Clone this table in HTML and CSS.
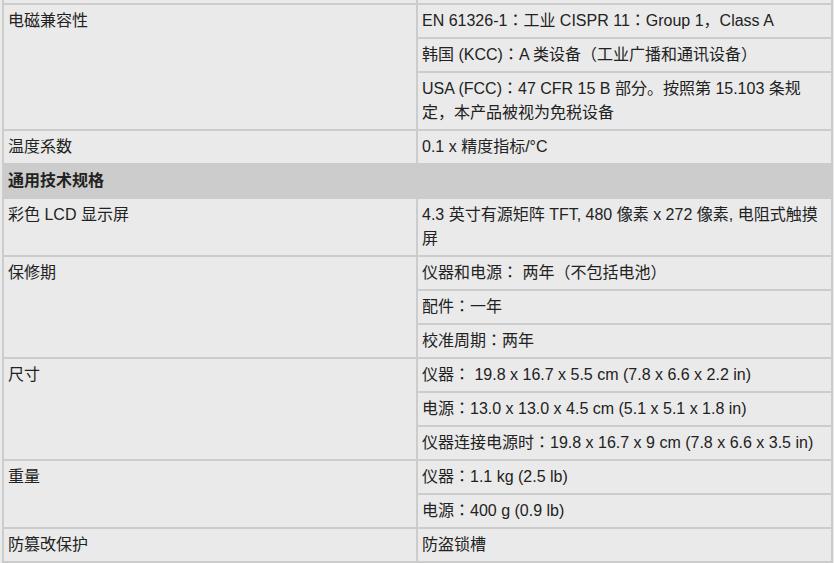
FILE: index.html
```html
<!DOCTYPE html>
<html lang="zh-CN">
<head>
<meta charset="utf-8">
<title>技术规格</title>
<link rel="stylesheet" href="styles.css">
</head>
<body>
<table class="spec">
  <colgroup><col class="c-name"><col class="c-val"></colgroup>
  <tbody>
    <tr class="cut"><td></td><td></td></tr>
    <tr><td rowspan="3">电磁兼容性</td><td>EN 61326-1：工业 CISPR 11：Group 1，Class A</td></tr>
    <tr><td>韩国 (KCC)：A 类设备（工业广播和通讯设备）</td></tr>
    <tr><td>USA (FCC)：47 CFR 15 B 部分。按照第 15.103 条规定，本产品被视为免税设备</td></tr>
    <tr><td>温度系数</td><td>0.1 x 精度指标/°C</td></tr>
    <tr class="section"><th colspan="2">通用技术规格</th></tr>
    <tr><td>彩色 LCD 显示屏</td><td>4.3 英寸有源矩阵 TFT, 480 像素 x 272 像素, 电阻式触摸屏</td></tr>
    <tr><td rowspan="3">保修期</td><td>仪器和电源： 两年（不包括电池）</td></tr>
    <tr><td>配件：一年</td></tr>
    <tr><td>校准周期：两年</td></tr>
    <tr><td rowspan="3">尺寸</td><td>仪器： 19.8 x 16.7 x 5.5 cm (7.8 x 6.6 x 2.2 in)</td></tr>
    <tr><td>电源：13.0 x 13.0 x 4.5 cm (5.1 x 5.1 x 1.8 in)</td></tr>
    <tr><td>仪器连接电源时：19.8 x 16.7 x 9 cm (7.8 x 6.6 x 3.5 in)</td></tr>
    <tr><td rowspan="2">重量</td><td>仪器：1.1 kg (2.5 lb)</td></tr>
    <tr><td>电源：400 g (0.9 lb)</td></tr>
    <tr><td>防篡改保护</td><td>防盗锁槽</td></tr>
  </tbody>
</table>
</body>
</html>
```
FILE: styles.css
```css
html, body {
  margin: 0;
  padding: 0;
  background: #eaeaea;
}
body {
  font-family: "Liberation Sans", Arial, "Noto Sans CJK JP", "Noto Sans CJK SC", sans-serif;
  font-size: 16px;
  color: #222;
  font-feature-settings: "locl" 0;
}
.spec {
  width: 831px;
  margin: -2px 0 0 2px;
  border-collapse: separate;
  border-spacing: 2px;
  background: #cccccc;
  table-layout: fixed;
}
.c-name { width: 412px; }
.c-val { width: 413px; }
.spec td {
  background: #eaeaea;
  padding: 4px;
  line-height: 24px;
  vertical-align: top;
  text-align: left;
}
.spec .cut td {
  height: 3px;
  padding: 0;
  line-height: 3px;
}
.spec .section th {
  background: #cccccc;
  padding: 4px;
  line-height: 24px;
  text-align: left;
  font-weight: bold;
  font-size: 16px;
  color: #222;
}
```
